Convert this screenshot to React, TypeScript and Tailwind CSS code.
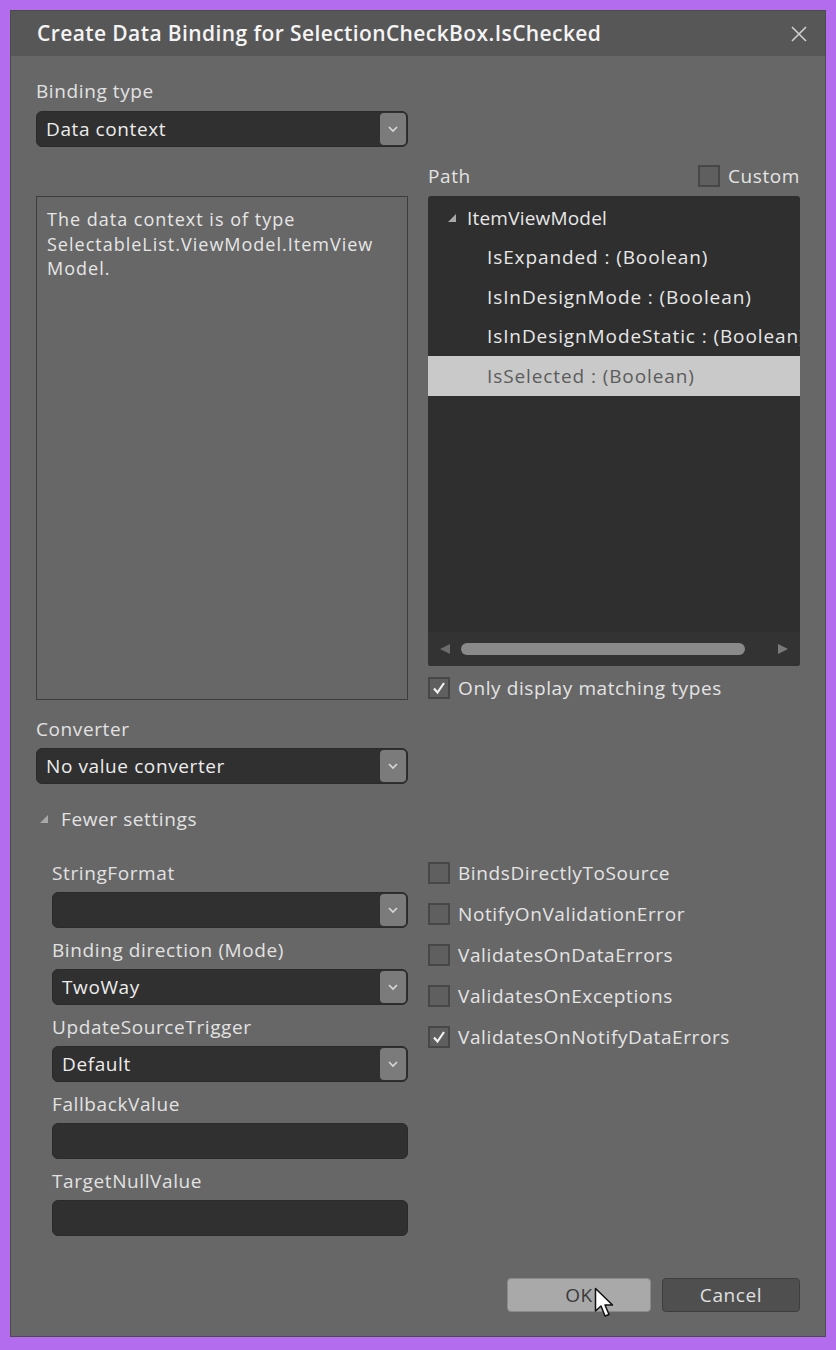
import React from "react";

const font = { fontFamily: '"Open Sans", "Noto Sans", "Liberation Sans", sans-serif' };

function Chevron() {
  return (
    <div className="flex h-[32px] w-[26px] items-center justify-center rounded-[4px] bg-[#7b7b7b]">
      <svg width="12" height="8" viewBox="0 0 12 8">
        <path d="M2 2 L6 6 L10 2" fill="none" stroke="#d8d8d8" strokeWidth="1.6" />
      </svg>
    </div>
  );
}

function Dropdown({ value }: { value?: string }) {
  return (
    <div className="flex h-[36px] items-center justify-between rounded-[6px] border border-[#2a2a2a] bg-[#303030] pl-[9px] pr-[1px]">
      <span className="text-[19px] tracking-[0.6px] text-[#ececec]">{value}</span>
      <Chevron />
    </div>
  );
}

function CheckBox({ checked, label }: { checked?: boolean; label: string }) {
  return (
    <div className="flex h-[24px] items-center gap-[8px]">
      <div className="flex h-[22px] w-[22px] shrink-0 items-center justify-center border-2 border-[#474747] bg-[#5f5f5f]">
        {checked && (
          <svg width="16" height="16" viewBox="0 0 16 16">
            <path d="M3 8.5 L6.5 12.5 L13 3" fill="none" stroke="#f2f2f2" strokeWidth="2.2" />
          </svg>
        )}
      </div>
      <span className="whitespace-nowrap text-[19px] tracking-[0.6px] text-[#e4e4e4]">{label}</span>
    </div>
  );
}

function Label({ children }: { children: React.ReactNode }) {
  return <div className="h-[24px] text-[19px] leading-[24px] tracking-[0.6px] text-[#e2e2e2]">{children}</div>;
}

function Field({ label, value, dropdown }: { label: string; value?: string; dropdown?: boolean }) {
  return (
    <div className="flex flex-col">
      <Label>{label}</Label>
      <div className="mt-[7px]">
        {dropdown ? <Dropdown value={value} /> : <div className="h-[36px] rounded-[6px] border border-[#2a2a2a] bg-[#303030]" />}
      </div>
    </div>
  );
}

function Tri() {
  return (
    <svg width="10" height="10" viewBox="0 0 10 10">
      <path d="M9 1 L9 9 L1 9 Z" fill="#a8a8a8" />
    </svg>
  );
}

export default function App() {
  const props = ["IsExpanded : (Boolean)", "IsInDesignMode : (Boolean)", "IsInDesignModeStatic : (Boolean)"];
  return (
    <div className="h-[1350px] w-[836px] bg-[#b36ced] pl-[10px] pt-[10px]" style={font}>
      <div className="relative flex h-[1327px] w-[816px] flex-col border border-[#4c4c4c] bg-[#676767]">
        <div className="flex h-[45px] shrink-0 items-center justify-between bg-[#575757] pl-[26px] pr-[16px]">
          <span className="text-[21px] font-semibold tracking-[0.4px] text-[#f4f4f4]">Create Data Binding for SelectionCheckBox.IsChecked</span>
          <svg width="20" height="20" viewBox="0 0 20 20">
            <path d="M3 3 L17 17 M17 3 L3 17" stroke="#d0d0d0" strokeWidth="1.6" />
          </svg>
        </div>

        <div className="flex flex-1 flex-col px-[25px]">
          <div className="mt-[23px] w-[372px]">
            <Label>Binding type</Label>
            <div className="mt-[8px]">
              <Dropdown value="Data context" />
            </div>
          </div>

          <div className="mt-[17px] grid grid-cols-[372px_372px] gap-x-[20px]">
            <div className="mt-[32px] h-[504px] border border-[#3c3c3c] px-[10px] pt-[10px] text-[18px] leading-[24.5px] tracking-[1px] text-[#e6e6e6]">
              The data context is of type
              <br />
              SelectableList.ViewModel.ItemView
              <br />
              Model.
            </div>
            <div className="flex flex-col">
              <div className="flex h-[24px] items-center justify-between">
                <span className="text-[19px] tracking-[0.6px] text-[#e2e2e2]">Path</span>
                <CheckBox label="Custom" />
              </div>
              <div className="mt-[8px] flex h-[470px] flex-col overflow-hidden rounded-[3px] bg-[#2f2f2f] pt-[2px]">
                <div className="flex h-[39.5px] items-center gap-[10px] pl-[19px]">
                  <Tri />
                  <span className="text-[19px] tracking-[0.2px] text-[#e8e8e8]">ItemViewModel</span>
                </div>
                {props.map((p) => (
                  <div key={p} className="flex h-[39.5px] items-center whitespace-nowrap pl-[59px] text-[19px] tracking-[0.9px] text-[#e8e8e8]">
                    {p}
                  </div>
                ))}
                <div className="flex h-[39.5px] items-center bg-[#c9c9c9] pl-[59px] text-[19px] tracking-[0.9px] text-[#5c5c5c]">IsSelected : (Boolean)</div>
                <div className="flex-1" />
                <div className="flex h-[34px] items-center gap-[10px] bg-[#333333] px-[11px]">
                  <svg width="12" height="12" viewBox="0 0 12 12">
                    <path d="M11 1 L11 11 L1 6 Z" fill="#6c6c6c" />
                  </svg>
                  <div className="h-[12px] flex-1 rounded-full bg-[#8a8a8a]" />
                  <svg width="12" height="12" viewBox="0 0 12 12" className="ml-[22px]">
                    <path d="M1 1 L1 11 L11 6 Z" fill="#7a7a7a" />
                  </svg>
                </div>
              </div>
              <div className="mt-[10px]">
                <CheckBox checked label="Only display matching types" />
              </div>
            </div>
          </div>

          <div className="mt-[17px] w-[372px]">
            <Label>Converter</Label>
            <div className="mt-[7px]">
              <Dropdown value="No value converter" />
            </div>
          </div>

          <div className="mt-[23px] flex h-[24px] items-center gap-[12px] pl-[3px]">
            <Tri />
            <span className="text-[19px] tracking-[0.6px] text-[#e2e2e2]">Fewer settings</span>
          </div>

          <div className="mt-[30px] grid grid-cols-[372px_372px] gap-x-[20px]">
            <div className="flex flex-col gap-[10px] pl-[16px]">
              <Field label="StringFormat" dropdown />
              <Field label="Binding direction (Mode)" value="TwoWay" dropdown />
              <Field label="UpdateSourceTrigger" value="Default" dropdown />
              <Field label="FallbackValue" />
              <Field label="TargetNullValue" />
            </div>
            <div className="flex flex-col gap-[17px]">
              <CheckBox label="BindsDirectlyToSource" />
              <CheckBox label="NotifyOnValidationError" />
              <CheckBox label="ValidatesOnDataErrors" />
              <CheckBox label="ValidatesOnExceptions" />
              <CheckBox checked label="ValidatesOnNotifyDataErrors" />
            </div>
          </div>

          <div className="mt-auto flex justify-end gap-[11px] pb-[24px]">
            <div className="relative flex h-[34px] w-[144px] items-center justify-center rounded-[4px] border border-[#8a8a8a] bg-[#a9a9a9] text-[19px] tracking-[0.6px] text-[#3a3a3a]">
              OK
              <svg className="absolute left-[86px] top-[8px]" width="22" height="32" viewBox="0 0 22 32">
                <path d="M1.5 1.5 L1.5 24 L7 19 L11 29 L15 27.5 L11 18 L18.5 18 Z" fill="#ffffff" stroke="#111111" strokeWidth="1.5" strokeLinejoin="round" />
              </svg>
            </div>
            <div className="flex h-[34px] w-[138px] items-center justify-center rounded-[4px] border border-[#3e3e3e] bg-[#4f4f4f] text-[19px] tracking-[0.6px] text-[#e0e0e0]">
              Cancel
            </div>
          </div>
        </div>
      </div>
    </div>
  );
}
